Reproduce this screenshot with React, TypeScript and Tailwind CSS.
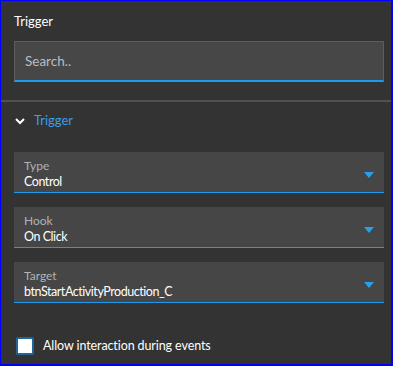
import React from "react";

const font = { fontFamily: "Lato, 'Noto Sans', sans-serif" };

function Field({ label, value }: { label: string; value: string }) {
  return (
    <div className="relative ml-[13px] w-[370px] h-[41px] bg-[#464646] border-b border-[#1e9bef] pl-[10px] pt-[6px]">
      <div className="text-[12px] leading-[15px] text-[#aeb3b8]">{label}</div>
      <div className="text-[12.5px] leading-[17px] tracking-[-0.45px] text-white">{value}</div>
      <svg className="absolute right-[10px] top-[20px]" width="10" height="6" viewBox="0 0 10 6">
        <path d="M0 0 L10 0 L5 6 Z" fill="#2a9fee" />
      </svg>
    </div>
  );
}

export default function App() {
  return (
    <div
      className="w-[393px] h-[366px] bg-[#333333] border-l border-t border-r-2 border-b-2 border-[#0000ff] flex flex-col"
      style={font}
    >
      <div className="pt-[11px] pl-[13px] text-[13px] leading-[18px] text-white">Trigger</div>
      <div className="mt-[11px] ml-[13px] w-[370px] h-[41px] bg-[#474747] border border-[#5c5c5c] border-b-2 border-b-[#1e9bef] flex items-center pl-[10px] text-[13.5px] text-[#b6bec6]">
        Search..
      </div>
      <div className="mt-[18px] h-[2px] bg-[#505050]" />
      <div className="mt-[9px] h-[20px] flex items-center pl-[14px]">
        <svg width="10" height="7" viewBox="0 0 10 7">
          <path d="M1 1 L5 5 L9 1" stroke="white" strokeWidth="2" fill="none" />
        </svg>
        <span className="ml-[9px] text-[13px] text-[#3d9ee9]">Trigger</span>
      </div>
      <div className="mt-[21px] flex flex-col gap-[14px]">
        <Field label="Type" value="Control" />
        <Field label="Hook" value="On Click" />
        <Field label="Target" value="btnStartActivityProduction_C" />
      </div>
      <div className="mt-[34px] ml-[15px] flex items-center">
        <div className="w-[18px] h-[18px] bg-white border-2 border-[#1f6699] rounded-[2px]" />
        <span className="ml-[9px] text-[12.5px] tracking-[-0.1px] text-white">Allow interaction during events</span>
      </div>
    </div>
  );
}
